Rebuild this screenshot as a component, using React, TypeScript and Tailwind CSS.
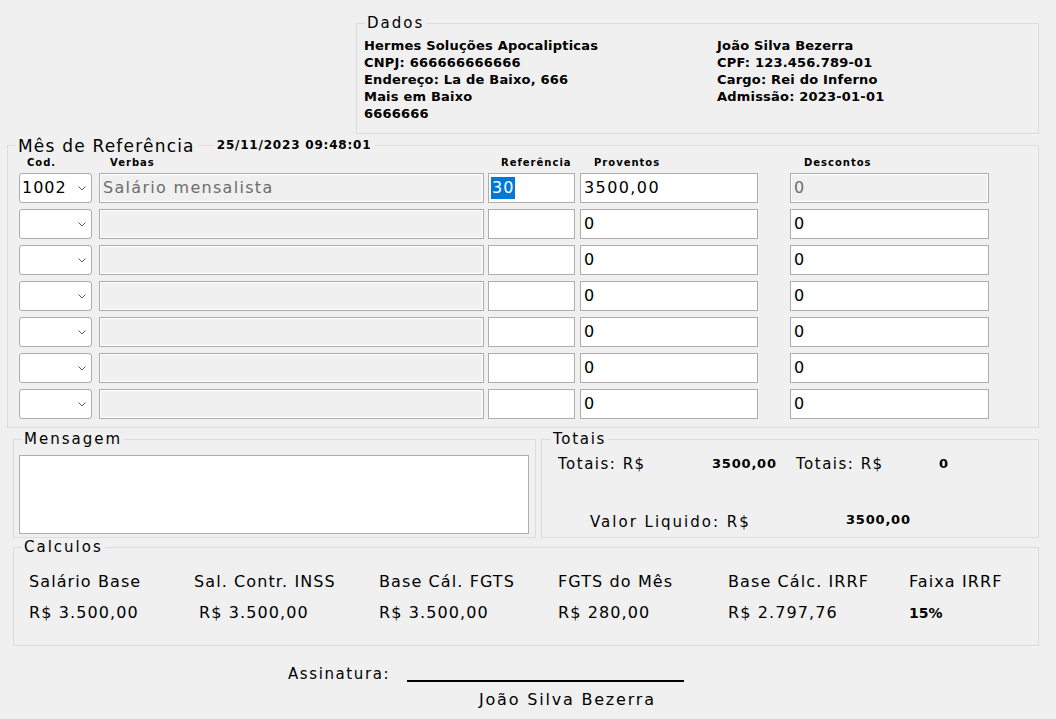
import React from "react";

type RowProps = {
  code?: string;
  verba?: string;
  refValue?: string;
  prov: string;
  desc: string;
  first?: boolean;
};

function Chevron() {
  return (
    <svg width="8" height="5" viewBox="0 0 8 5" className="shrink-0">
      <polyline points="0.5,0.5 4,4 7.5,0.5" fill="none" stroke="#606060" strokeWidth="1" />
    </svg>
  );
}

function Row({ code, verba, refValue, prov, desc, first }: RowProps) {
  return (
    <div className="flex h-[30px]">
      <div className="w-[73px] h-full bg-white border border-[#adadad] rounded-[3px] flex items-center justify-between pl-[2px] pr-[5px] text-[16px] tracking-[1px]">
        <span>{code ?? ""}</span>
        <Chevron />
      </div>
      <div className="ml-[7px] w-[385px] h-full bg-[#f0f0f0] border border-[#adadad] shadow-[inset_0_0_0_1px_#ffffff] flex items-center pl-[3px] text-[16px] text-[#6d6d6d] tracking-[1.3px]">
        {verba ?? ""}
      </div>
      <div className="ml-[4px] w-[87px] h-full bg-white border border-[#adadad] flex items-center pl-[2px] text-[16px] tracking-[1px]">
        {refValue ? (
          <span className="bg-[#0078d7] text-white leading-[22px] pl-[1px] pr-[1px]">{refValue}</span>
        ) : null}
      </div>
      <div className="ml-[5px] w-[178px] h-full bg-white border border-[#adadad] flex items-center pl-[3px] text-[16px] tracking-[1.4px]">
        {prov}
      </div>
      <div
        className={
          first
            ? "ml-[32px] w-[199px] h-full bg-[#f0f0f0] border border-[#adadad] shadow-[inset_0_0_0_1px_#ffffff] flex items-center pl-[3px] text-[16px] text-[#6d6d6d] tracking-[1.4px]"
            : "ml-[32px] w-[199px] h-full bg-white border border-[#adadad] flex items-center pl-[3px] text-[16px] tracking-[1.4px]"
        }
      >
        {desc}
      </div>
    </div>
  );
}

export default function App() {
  const rows: RowProps[] = [
    { code: "1002", verba: "Salário mensalista", refValue: "30", prov: "3500,00", desc: "0", first: true },
    { prov: "0", desc: "0" },
    { prov: "0", desc: "0" },
    { prov: "0", desc: "0" },
    { prov: "0", desc: "0" },
    { prov: "0", desc: "0" },
    { prov: "0", desc: "0" },
  ];

  const calc = [
    { label: "Salário Base", value: "R$ 3.500,00", vcls: "" },
    { label: "Sal. Contr. INSS", value: "R$ 3.500,00", vcls: "pl-[5px]" },
    { label: "Base Cál. FGTS", value: "R$ 3.500,00", vcls: "" },
    { label: "FGTS do Mês", value: "R$ 280,00", vcls: "" },
    { label: "Base Cálc. IRRF", value: "R$ 2.797,76", vcls: "" },
  ];

  return (
    <div className="w-[1056px] h-[719px] bg-[#f0f0f0] text-black overflow-hidden flex flex-col font-['DejaVu_Sans',sans-serif]">
      {/* Dados */}
      <fieldset className="ml-[356px] mt-[14px] w-[683px] h-[120px] border border-[#dcdcdc]">
        <legend className="ml-[8px] px-[2px] text-[15px] leading-[18px] tracking-[2px]">Dados</legend>
        <div className="grid grid-cols-[353px_1fr] pl-[7px] pt-[5px] text-[13px] leading-[17px] font-bold tracking-[0.2px]">
          <div className="flex flex-col">
            <span>Hermes Soluções Apocalipticas</span>
            <span>CNPJ: 666666666666</span>
            <span>Endereço: La de Baixo, 666</span>
            <span>Mais em Baixo</span>
            <span>6666666</span>
          </div>
          <div className="flex flex-col">
            <span>João Silva Bezerra</span>
            <span>CPF: 123.456.789-01</span>
            <span>Cargo: Rei do Inferno</span>
            <span>Admissão: 2023-01-01</span>
          </div>
        </div>
      </fieldset>

      {/* Mês de Referência */}
      <fieldset className="ml-[7px] mt-[2px] w-[1032px] h-[292px] border border-[#dcdcdc]">
        <legend className="ml-[8px] pl-[2px] pr-[4px] h-[18px] flex items-center whitespace-nowrap">
          <span className="text-[17px] leading-[18px] tracking-[1.2px] pt-[2px]">Mês de Referência</span>
          <span className="w-[16px] h-px bg-[#dcdcdc] ml-[3px] mr-[3px]"></span>
          <span className="text-[12px] leading-[18px] font-bold tracking-[0.8px]">25/11/2023 09:48:01</span>
        </legend>
        <div className="flex pl-[11px] mt-[2px] h-[14px] text-[10px] leading-[14px] font-bold tracking-[1px] whitespace-nowrap">
          <div className="w-[73px] pl-[8px]">Cod.</div>
          <div className="ml-[7px] w-[385px] pl-[11px]">Verbas</div>
          <div className="ml-[4px] w-[87px] pl-[13px]">Referência</div>
          <div className="ml-[5px] w-[178px] pl-[14px]">Proventos</div>
          <div className="ml-[32px] w-[199px] pl-[14px]">Descontos</div>
        </div>
        <div className="flex flex-col gap-[6px] mt-[3px] pl-[11px]">
          {rows.map((r, i) => (
            <Row key={i} {...r} />
          ))}
        </div>
      </fieldset>

      {/* Mensagem + Totais */}
      <div className="flex ml-[13px] mt-[2px]">
        <fieldset className="w-[523px] h-[108px] border border-[#dcdcdc]">
          <legend className="ml-[8px] px-[2px] text-[15px] leading-[18px] tracking-[2px]">Mensagem</legend>
          <div className="ml-[5px] mt-[7px] w-[510px] h-[79px] bg-white border border-[#adadad]"></div>
        </fieldset>
        <fieldset className="ml-[5px] w-[498px] h-[108px] border border-[#dcdcdc]">
          <legend className="ml-[9px] px-[2px] text-[15px] leading-[18px] tracking-[1.7px]">Totais</legend>
          <div className="flex items-center pl-[16px] mt-[7px] h-[18px] whitespace-nowrap">
            <span className="w-[154px] text-[15px] tracking-[1.5px]">Totais: R$</span>
            <span className="w-[84px] text-[13px] font-bold tracking-[0.8px]">3500,00</span>
            <span className="w-[143px] text-[15px] tracking-[1.5px]">Totais: R$</span>
            <span className="text-[13px] font-bold">0</span>
          </div>
          <div className="flex items-center pl-[48px] mt-[40px] h-[18px] whitespace-nowrap">
            <span className="w-[256px] text-[15px] tracking-[2px]">Valor Liquido: R$</span>
            <span className="text-[13px] font-bold tracking-[0.8px] pb-[4px]">3500,00</span>
          </div>
        </fieldset>
      </div>

      {/* Calculos */}
      <fieldset className="ml-[13px] w-[1026px] h-[108px] border border-[#dcdcdc]">
        <legend className="ml-[8px] px-[2px] text-[15px] leading-[18px] tracking-[2px]">Calculos</legend>
        <div className="grid grid-cols-[165px_185px_179px_170px_181px_1fr] pl-[15px] mt-[16px] text-[16px] tracking-[1.1px] whitespace-nowrap">
          {calc.map((c) => (
            <div key={c.label} className="flex flex-col">
              <span className="leading-[20px]">{c.label}</span>
              <span className={"leading-[20px] mt-[11px] " + c.vcls}>{c.value}</span>
            </div>
          ))}
          <div className="flex flex-col">
            <span className="leading-[20px]">Faixa IRRF</span>
            <span className="leading-[20px] mt-[11px] text-[14px] font-bold tracking-[0px]">15%</span>
          </div>
        </div>
      </fieldset>

      {/* Assinatura */}
      <div className="flex items-end pl-[288px] mt-[19px] h-[18px]">
        <span className="text-[15px] tracking-[1.6px] leading-[18px]">Assinatura:</span>
        <span className="ml-[17px] w-[277px] border-b-2 border-black mb-[1px]"></span>
      </div>
      <div className="pl-[479px] mt-[8px] text-[16px] tracking-[1.8px] leading-[18px]">João Silva Bezerra</div>
    </div>
  );
}
